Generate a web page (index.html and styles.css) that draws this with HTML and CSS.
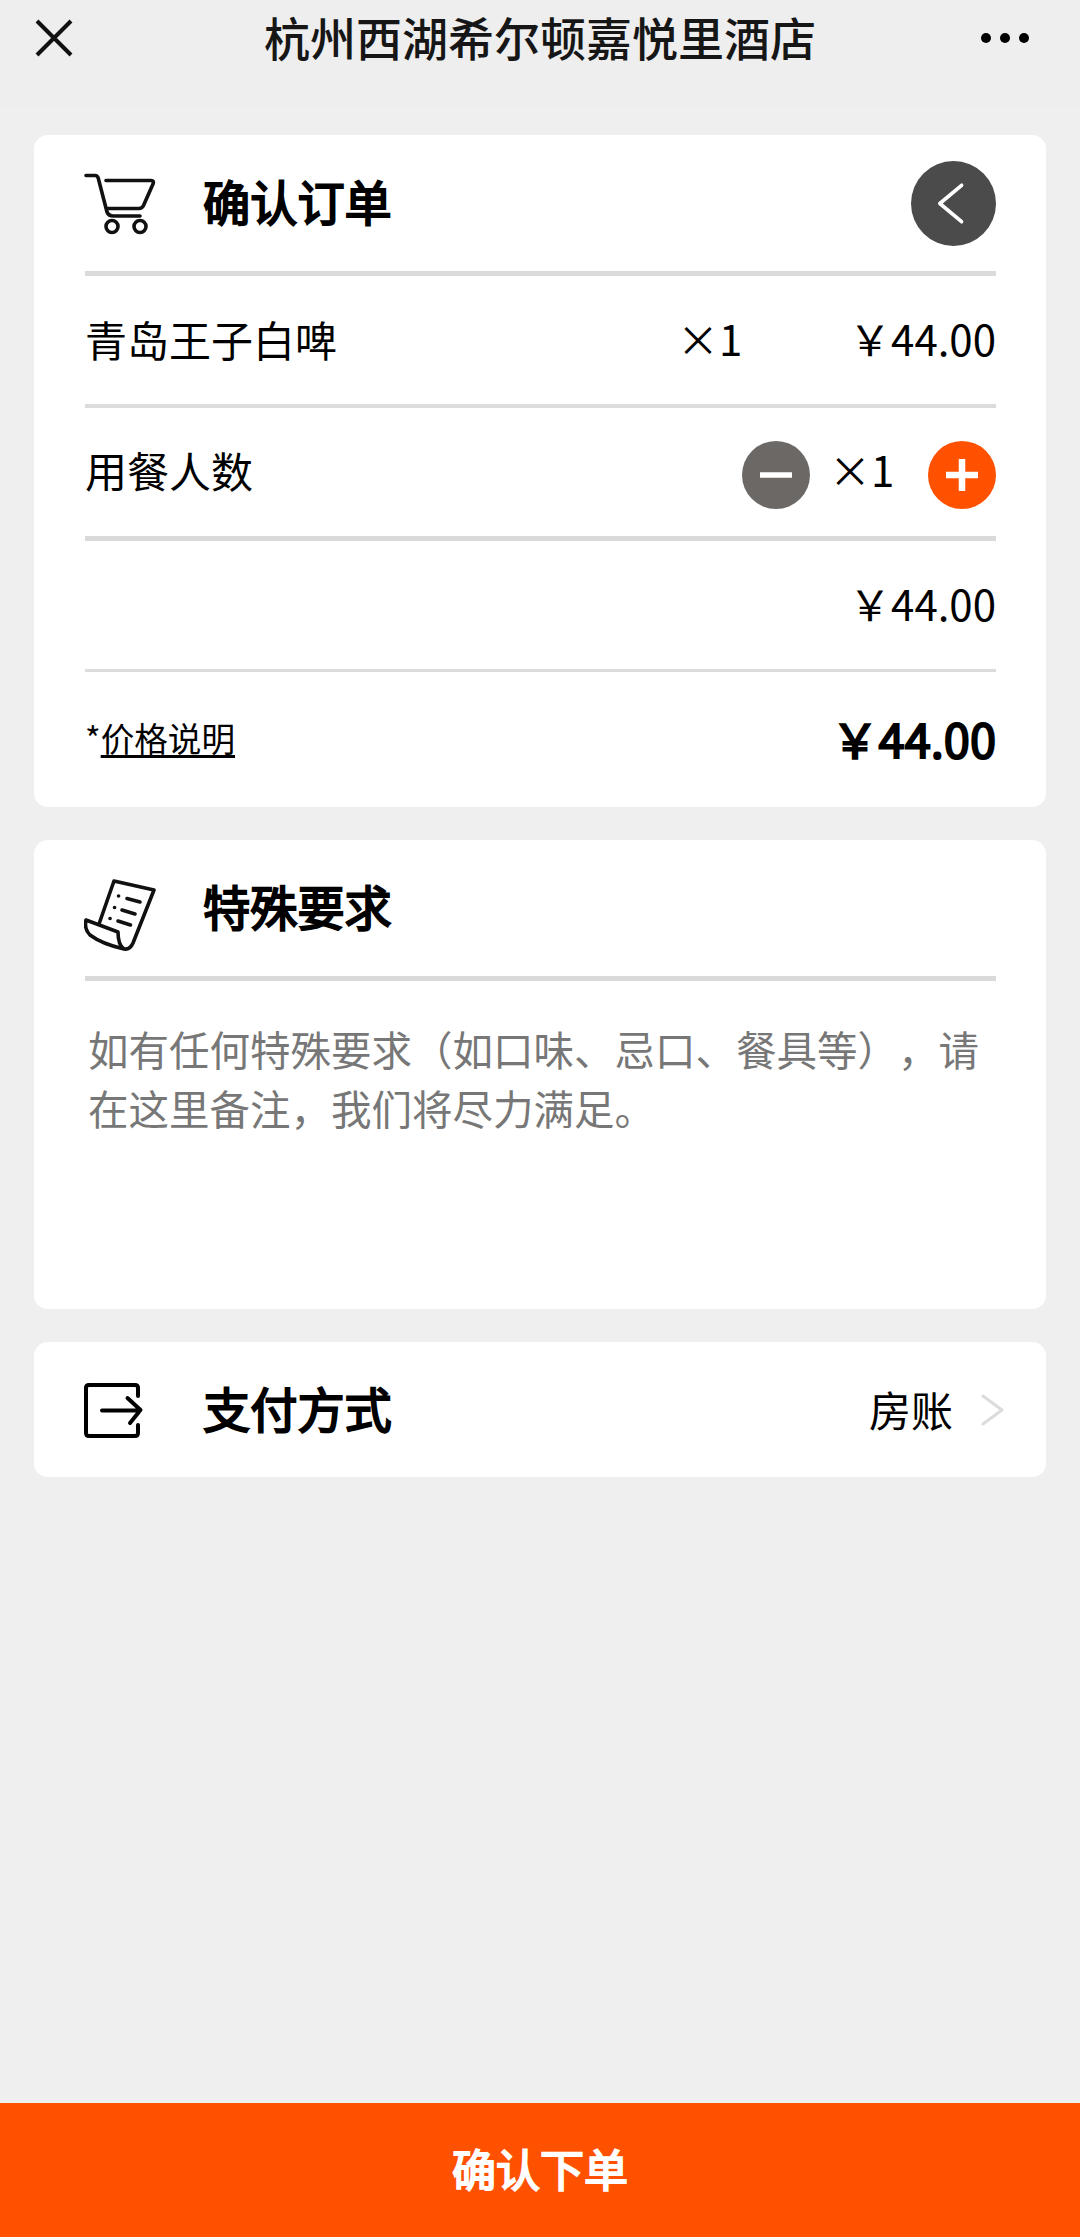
FILE: index.html
```html
<!DOCTYPE html>
<html lang="zh-CN">
<head>
<meta charset="utf-8">
<title>确认订单</title>
<link rel="stylesheet" href="styles.css">
</head>
<body>
<div class="page">
  <header class="topbar">
    <svg class="close" viewBox="0 0 40 40"><path d="M3 3 37 37M37 3 3 37"/></svg>
    <h1 class="topbar-title">杭州西湖希尔顿嘉悦里酒店</h1>
    <svg class="more" viewBox="0 0 50 12"><circle cx="6" cy="6" r="5"/><circle cx="25" cy="6" r="5"/><circle cx="44" cy="6" r="5"/></svg>
  </header>

  <main class="content">
    <section class="card order">
      <div class="card-head">
        <svg class="icon" viewBox="0 0 72 72">
          <path d="M2 8.500H11Q13.500 8.500 14.200 11L23 45Q24.500 49 29.500 49H56M22 13.500H67Q70.500 13.500 69 17L59.500 38.500Q58 41.500 55 41.500H23"/>
          <circle cx="28" cy="59.500" r="6"/><circle cx="56" cy="59.500" r="6"/>
        </svg>
        <h2 class="heading">确认订单</h2>
        <button class="back" type="button"><svg viewBox="0 0 84 84"><path d="M50 24 28.500 42 50 60"/></svg></button>
      </div>
      <div class="row row-item">
        <span class="name">青岛王子白啤</span>
        <span class="qty">×1</span>
        <span class="price">￥44.00</span>
      </div>
      <div class="row row-people">
        <span class="name">用餐人数</span>
        <div class="stepper">
          <button class="step minus" type="button"><svg viewBox="0 0 68 68"><path d="M18 34H50"/></svg></button>
          <span class="count">×1</span>
          <button class="step plus" type="button"><svg viewBox="0 0 68 68"><path d="M18 34H50M34 18V50"/></svg></button>
        </div>
      </div>
      <div class="row row-subtotal">
        <span class="price">￥44.00</span>
      </div>
      <div class="row row-total">
        <span class="note">*<a class="note-link">价格说明</a></span>
        <strong class="total">￥44.00</strong>
      </div>
    </section>

    <section class="card request">
      <div class="card-head">
        <svg class="icon doc" viewBox="0 0 72 72">
          <path d="M30 2 70 11 49 64Q46 71 40 70Q34 66 34 53L2 41Q0 50 6 56Q18 65 40 70M30 2 15 45"/>
          <path d="M43 19.500 56 23M38 31 51 35M34 42 46.500 46"/>
          <path class="dots" d="M34.500 17h.1M30.500 28.500h.1M26 39.500h.1"/>
        </svg>
        <h2 class="heading">特殊要求</h2>
      </div>
      <p class="placeholder">如有任何特殊要求（如口味、忌口、餐具等），请在这里备注，我们将尽力满足。</p>
    </section>

    <section class="card payment">
      <svg class="icon pay" viewBox="0 0 72 72">
        <path d="M54 22V14Q54 11 51 11H5Q2 11 2 14V59Q2 62 5 62H51Q54 62 54 59V51"/>
        <path d="M18 36.500H56M43.500 24 56.500 36 46 49"/>
      </svg>
      <h2 class="heading">支付方式</h2>
      <span class="method">房账</span>
      <svg class="chevron" viewBox="0 0 24 32"><path d="M2 2 21 16 2 30"/></svg>
    </section>
  </main>

  <button class="submit" type="button">确认下单</button>
</div>
</body>
</html>
```
FILE: styles.css
```css
* { box-sizing: border-box; margin: 0; }
body {
  background: #efefef;
  color: #000;
  font-family: "Noto Sans CJK SC", sans-serif;
  font-size: 42px;
  line-height: 1.4;
}
button { border: 0; padding: 0; font: inherit; }
svg { display: block; fill: none; stroke: #111; stroke-width: 4; stroke-linecap: round; stroke-linejoin: round; }
.page { width: 1080px; height: 2237px; display: flex; flex-direction: column; }

.topbar {
  height: 107px;
  padding: 0 50px 32px 34px;
  background: #eee;
  display: grid;
  grid-template-columns: 100px 1fr 84px;
  align-items: center;
}
.close { width: 40px; height: 40px; stroke-linecap: butt; }
.topbar-title { font-size: 46px; font-weight: 500; line-height: 64px; color: #161616; padding-bottom: 3px; text-align: center; white-space: nowrap; }
.more { width: 50px; height: 12px; fill: #000; stroke: none; justify-self: end; }

.content { flex: 1; padding: 28px 34px 0; }
.card { background: #fff; border-radius: 14px; padding: 0 50px 0 51px; }
.card + .card { margin-top: 33px; }
.card-head {
  height: 141px;
  border-bottom: 5px solid #dadada;
  display: flex;
  align-items: center;
}
.icon { width: 72px; height: 72px; margin-right: 47px; margin-left: -1px; stroke-width: 3.6; }
.heading { font-size: 47.2px; font-weight: 400; line-height: 66px; padding-bottom: 5px; -webkit-text-stroke: 2px #000; }
.back { width: 85px; height: 85px; margin-left: auto; border-radius: 50%; background: #4b4b4b; }
.back svg { stroke: #fff; stroke-width: 3.6; }

.row { height: 132px; display: flex; align-items: center; border-bottom: 4px solid #dcdcdc; }
.name { flex: 1; padding-bottom: 1px; }
.qty, .count { font-size: 42px; width: 67px; }
.qty { padding-bottom: 4px; }
.price { font-size: 42px; width: 252px; text-align: right; padding-bottom: 4px; }
.row-people { height: 133px; border-bottom: 5px solid #dadada; }
.row-people .name { padding-bottom: 3px; }
.stepper { display: flex; align-items: center; }
.step { width: 68px; height: 68px; border-radius: 50%; margin-top: 5px; }
.step svg { stroke: #fff; stroke-linecap: butt; }
.minus { background: #6c6866; }
.minus svg { stroke-width: 5.5; }
.plus { background: #ff5100; }
.plus svg { stroke-width: 6.5; }
.count { margin: 0 32px 0 19px; padding-bottom: 5px; }
.row-subtotal { height: 131px; border-bottom-width: 3px; justify-content: flex-end; }
.row-total { height: 135px; border-bottom: 0; justify-content: space-between; }
.note { font-size: 33.6px; padding-bottom: 3px; }
.note-link { text-decoration: underline; text-decoration-thickness: 3px; text-underline-offset: 3px; text-decoration-skip-ink: none; }
.total { font-size: 47px; font-weight: 400; padding-bottom: 4px; -webkit-text-stroke: 2px #000; }

.request { height: 469px; }
.request .heading { padding-bottom: 4px; }
.doc { margin-top: 14px; }
.placeholder {
  padding: 38px 0 0 3px;
  font-size: 40.5px;
  line-height: 59px;
  color: #777;
  text-spacing-trim: space-all;
}

.payment { height: 135px; padding-right: 41px; display: flex; align-items: center; }
.payment .heading { flex: 1; padding-bottom: 4px; }
.pay { stroke: #000; stroke-width: 4; }
.method { margin-right: 28px; padding-bottom: 1px; }
.chevron { width: 24px; height: 32px; stroke: #dcdcdc; stroke-width: 3; }

.submit { height: 134px; background: #ff5100; color: #fff; font-size: 44px; font-weight: 400; padding-bottom: 3px; -webkit-text-stroke: 2px #fff; }
```
